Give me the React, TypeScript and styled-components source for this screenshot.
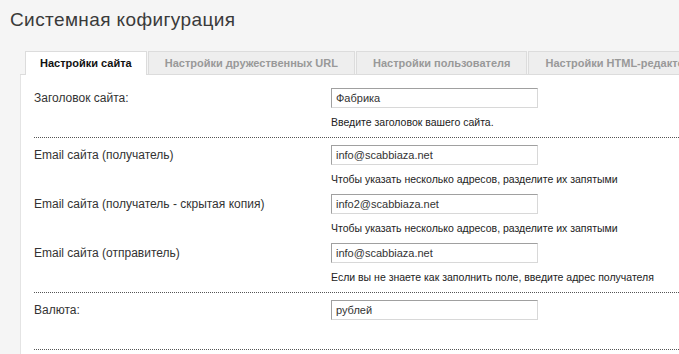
import React from "react";
import styled, { createGlobalStyle } from "styled-components";

const Global = createGlobalStyle`
  html, body { margin: 0; padding: 0; background: #f5f5f5; }
  body { font-family: "Liberation Sans", Arial, sans-serif; }
`;

const Page = styled.div`
  height: 100vh;
  background: #f5f5f5;
  overflow: hidden;
`;

const Title = styled.h1`
  margin: 0;
  padding: 8px 10px 0;
  font-size: 19px;
  line-height: 24px;
  font-weight: normal;
  letter-spacing: 0.4px;
  color: #3a3a3a;
  white-space: nowrap;
`;

const Tabs = styled.div`
  margin: 19px 0 0 20px;
  padding-left: 5px;
  display: flex;
  gap: 1px;
  border-bottom: 1px solid #dcdcdc;
  white-space: nowrap;
`;

const Tab = styled.div<{ $active?: boolean }>`
  flex: none;
  height: 22px;
  line-height: 22px;
  padding: 0 ${(p) => (p.$active ? "14px" : "16px")};
  font-size: 11px;
  font-weight: bold;
  border: 1px solid #dcdcdc;
  border-bottom: none;
  color: ${(p) => (p.$active ? "#111" : "#999")};
  background: ${(p) => (p.$active ? "#fff" : "#eeeeee")};
  margin-bottom: ${(p) => (p.$active ? "-1px" : "0")};
  padding-bottom: ${(p) => (p.$active ? "1px" : "0")};
`;

const Panel = styled.div`
  margin-left: 20px;
  background: #fff;
  border-left: 1px solid #e4e4e4;
  padding: 6px 0 0 13px;
  min-height: 300px;
`;

const Group = styled.div`
  padding-top: 7px;
  border-bottom: 1px dotted #555;
`;

const Field = styled.div`
  display: grid;
  grid-template-columns: 297px 1fr;
`;

const Label = styled.div`
  font-size: 12px;
  line-height: 20px;
  color: #333;
  white-space: nowrap;
`;

const Control = styled.div`
  display: flex;
  flex-direction: column;
`;

const Input = styled.input`
  box-sizing: border-box;
  width: 207px;
  height: 20px;
  margin: 0;
  padding: 0 4px;
  font-family: "Liberation Sans", Arial, sans-serif;
  font-size: 11px;
  color: #333;
  background: #fff;
  border: 1px solid;
  border-color: #a0a0a0 #d8d8d8 #d8d8d8 #a0a0a0;
  outline: none;
`;

const Help = styled.div`
  margin: 8px 0;
  height: 13px;
  font-size: 10.5px;
  line-height: 13px;
  color: #222;
  white-space: nowrap;
`;

type F = { label: string; value: string; help: string };

const groups: F[][] = [
  [{ label: "Заголовок сайта:", value: "Фабрика", help: "Введите заголовок вашего сайта." }],
  [
    {
      label: "Email сайта (получатель)",
      value: "info@scabbiaza.net",
      help: "Чтобы указать несколько адресов, разделите их запятыми",
    },
    {
      label: "Email сайта (получатель - скрытая копия)",
      value: "info2@scabbiaza.net",
      help: "Чтобы указать несколько адресов, разделите их запятыми",
    },
    {
      label: "Email сайта (отправитель)",
      value: "info@scabbiaza.net",
      help: "Если вы не знаете как заполнить поле, введите адрес получателя",
    },
  ],
  [{ label: "Валюта:", value: "рублей", help: "" }],
];

const tabs = [
  "Настройки сайта",
  "Настройки дружественных URL",
  "Настройки пользователя",
  "Настройки HTML-редактора",
];

export default function App() {
  return (
    <Page>
      <Global />
      <Title>Системная кофигурация</Title>
      <Tabs>
        {tabs.map((t, i) => (
          <Tab key={t} $active={i === 0}>
            {t}
          </Tab>
        ))}
      </Tabs>
      <Panel>
        {groups.map((g, gi) => (
          <Group key={gi}>
            {g.map((f) => (
              <Field key={f.label}>
                <Label>{f.label}</Label>
                <Control>
                  <Input defaultValue={f.value} />
                  <Help>{f.help}</Help>
                </Control>
              </Field>
            ))}
          </Group>
        ))}
      </Panel>
    </Page>
  );
}
